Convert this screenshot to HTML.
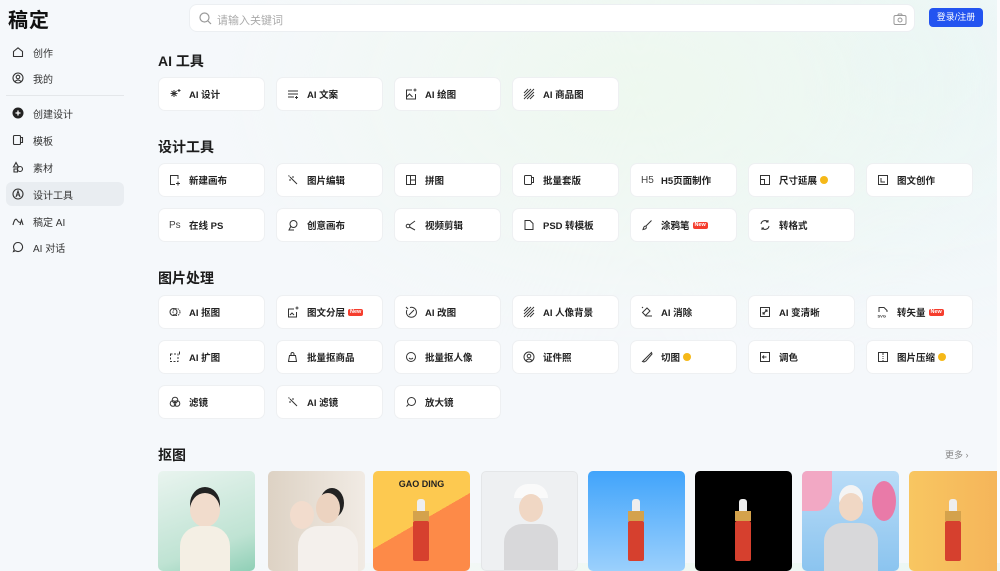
<!DOCTYPE html>
<html><head><meta charset="utf-8"><style>
*{margin:0;padding:0;box-sizing:border-box}
body{width:1000px;height:563px;overflow:hidden;font-family:"Liberation Sans","Noto Sans CJK SC",sans-serif;color:#222;position:relative;
background:radial-gradient(ellipse 420px 260px at 640px 90px,#eef8ef 0%,rgba(238,248,240,0) 100%),radial-gradient(ellipse 400px 300px at 900px 60px,#eaf6f6 0%,rgba(234,246,246,0) 100%),#f5f8fb}
.a{position:absolute}
.logo{left:8px;top:4px;font-size:20px;font-weight:700;letter-spacing:1px;color:#111}
.nav{left:6px;width:118px;height:24px;font-size:10px;color:#333;display:flex;align-items:center;padding-left:6px;border-radius:6px}
.nav svg{width:12px;height:12px;margin-right:9px}
.nav.on{background:#e9edf1}
.search{left:189px;top:4px;width:726px;height:28px;background:#fff;border-radius:8px;border:1px solid #eceff2}
.search span{position:absolute;left:27px;top:7px;font-size:11px;color:#aaa}
.btn{left:929px;top:8px;width:54px;height:19px;background:#2354f0;border-radius:4px;color:#fff;font-size:9px;text-align:center;line-height:19px}
h2{position:absolute;font-size:14px;font-weight:700;color:#1c1c1c;left:158px}
.c{position:absolute;width:107px;height:34px;background:#fff;border-radius:7px;border:1px solid #eef0f2;font-size:9.5px;font-weight:700;color:#222;display:flex;align-items:center;padding-left:10px}
.c svg{width:12px;height:12px;margin-right:8px;flex:none}
.new{background:#f53d2d;color:#fff;font-size:5.5px;padding:0 2px;border-radius:2px;margin-left:3px;line-height:7px;font-weight:700}
.star{width:8px;height:8px;border-radius:50%;background:#f5b818;margin-left:3px;display:inline-block}
.im{position:absolute;top:471px;width:97px;height:100px;border-radius:5px;overflow:hidden}
.bottle{position:absolute;left:40px;top:28px;width:16px;height:62px}
.more{left:945px;top:448px;font-size:9px;color:#888}
</style></head><body>
<div class="a logo">稿定</div>
<div class="a nav" style="top:40px"><svg viewBox="0 0 12 12" fill="none" stroke="#333" stroke-width="1.1"><path d="M1.5 5.5 6 1.8l4.5 3.7V10.5h-9z"/></svg>创作</div>
<div class="a nav" style="top:66px"><svg viewBox="0 0 12 12" fill="none" stroke="#333" stroke-width="1.1"><circle cx="6" cy="6" r="5"/><circle cx="6" cy="5" r="1.8"/><path d="M3 9.5q3-3 6 0"/></svg>我的</div>
<div class="a" style="left:6px;top:95px;width:118px;height:1px;background:#e4e7ea"></div>
<div class="a nav" style="top:101px"><svg viewBox="0 0 12 12"><circle cx="6" cy="6" r="5.5" fill="#222"/><path d="M6 3.5v5M3.5 6h5" stroke="#fff" stroke-width="1.3"/></svg>创建设计</div>
<div class="a nav" style="top:128px"><svg viewBox="0 0 12 12" fill="none" stroke="#333" stroke-width="1.1"><rect x="1.5" y="1.5" width="7" height="9" rx="1"/><path d="M8.5 3.5h2v5h-2"/></svg>模板</div>
<div class="a nav" style="top:155px"><svg viewBox="0 0 12 12" fill="none" stroke="#333" stroke-width="1.1"><path d="M4 1.5 1.5 6h5z"/><circle cx="8" cy="8" r="2.5"/><path d="M2 8h3.5v3H2z"/></svg>素材</div>
<div class="a nav on" style="top:182px"><svg viewBox="0 0 12 12" fill="none" stroke="#333" stroke-width="1.1"><circle cx="6" cy="6" r="5"/><path d="M4 9 6 3l2 6M4.8 7h2.4"/></svg>设计工具</div>
<div class="a nav" style="top:209px"><svg viewBox="0 0 12 12" fill="none" stroke="#333" stroke-width="1.1"><path d="M1 10q2-8 4-5t3 2M8 10l1.5-5 1.5 5"/></svg>稿定 AI</div>
<div class="a nav" style="top:235px"><svg viewBox="0 0 12 12" fill="none" stroke="#333" stroke-width="1.1"><path d="M6 1.5a4.5 4.5 0 1 1-2.5 8.2L1.5 10.5l.8-2A4.5 4.5 0 0 1 6 1.5z"/></svg>AI 对话</div>

<div class="a search"><svg class="a" style="left:9px;top:7px" width="13" height="13" viewBox="0 0 13 13" fill="none" stroke="#999" stroke-width="1.2"><circle cx="5.5" cy="5.5" r="4.5"/><path d="m9 9 3 3"/></svg><span>请输入关键词</span><svg class="a" style="right:7px;top:8px" width="14" height="12" viewBox="0 0 14 12" fill="none" stroke="#999" stroke-width="1"><rect x="1" y="2.5" width="12" height="9" rx="1.5"/><path d="M4.5 2.5 5.5 1h3l1 1.5"/><circle cx="7" cy="7" r="2"/></svg></div>
<div class="a btn">登录/注册</div>

<h2 style="top:51px">AI 工具</h2>
<h2 style="top:137px">设计工具</h2>
<h2 style="top:268px">图片处理</h2>
<h2 style="top:445px">抠图</h2>
<div class="a more">更多 ›</div>

<!-- icon defs reused -->
<svg width="0" height="0" style="position:absolute"><defs>
<g id="sq" fill="none" stroke="#333" stroke-width="1"><rect x="1.5" y="1.5" width="9" height="9" rx="1.5"/></g>
<g id="wand" fill="none" stroke="#333" stroke-width="1"><path d="M3 3l7 7M2 6h2M6 2v2M1.5 1.5l1 1"/></g>
<g id="hatch" fill="none" stroke="#333" stroke-width="0.9"><path d="M1 5 5 1M1 8 8 1M1 11 11 1M4 11l7-7M7 11l4-4"/></g>
</defs></svg>

<div class="c" style="left:158px;top:77px"><svg viewBox="0 0 12 12" fill="none" stroke="#333" stroke-width="1"><path d="M5 2v7M1.5 5.5h7M2.5 3l5 5M7.5 3l-5 5M10 1v3M8.5 2.5h3"/></svg>AI 设计</div>
<div class="c" style="left:276px;top:77px"><svg viewBox="0 0 12 12" fill="none" stroke="#333" stroke-width="1"><path d="M1 3h10M1 6h10M1 9h6M9.5 8v3M8 9.5h3"/></svg>AI 文案</div>
<div class="c" style="left:394px;top:77px"><svg viewBox="0 0 12 12" fill="none" stroke="#333" stroke-width="1"><path d="M7 2H1.5v9h9V6M1.5 9l3-3 3 3M10 0.5v3M8.5 2h3"/></svg>AI 绘图</div>
<div class="c" style="left:512px;top:77px"><svg viewBox="0 0 12 12"><use href="#hatch"/></svg>AI 商品图</div>

<div class="c" style="left:158px;top:163px"><svg viewBox="0 0 12 12" fill="none" stroke="#333" stroke-width="1"><path d="M9 5V1.5H1.5v9H6M9 7.5v4M7 9.5h4"/></svg>新建画布</div>
<div class="c" style="left:276px;top:163px"><svg viewBox="0 0 12 12"><use href="#wand"/></svg>图片编辑</div>
<div class="c" style="left:394px;top:163px"><svg viewBox="0 0 12 12" fill="none" stroke="#333" stroke-width="1"><rect x="1.5" y="1.5" width="9" height="9"/><path d="M5.5 1.5v9M5.5 6h5"/></svg>拼图</div>
<div class="c" style="left:512px;top:163px"><svg viewBox="0 0 12 12" fill="none" stroke="#333" stroke-width="1"><rect x="1.5" y="1.5" width="7" height="9" rx="1"/><path d="M8.5 3.5h2v5h-2"/></svg>批量套版</div>
<div class="c" style="left:630px;top:163px"><span style="font-size:10px;font-weight:400;color:#444;margin-right:8px;width:12px">H5</span>H5页面制作</div>
<div class="c" style="left:748px;top:163px"><svg viewBox="0 0 12 12" fill="none" stroke="#333" stroke-width="1"><rect x="1.5" y="1.5" width="9" height="9"/><path d="M1.5 5.5h4v5"/></svg>尺寸延展<span class="star"></span></div>
<div class="c" style="left:866px;top:163px"><svg viewBox="0 0 12 12" fill="none" stroke="#333" stroke-width="1"><rect x="1.5" y="1.5" width="9" height="9"/><path d="M4 4v4h4"/></svg>图文创作</div>

<div class="c" style="left:158px;top:208px"><span style="font-size:10px;font-weight:400;color:#444;margin-right:8px;width:12px">Ps</span>在线 PS</div>
<div class="c" style="left:276px;top:208px"><svg viewBox="0 0 12 12" fill="none" stroke="#333" stroke-width="1"><circle cx="6.5" cy="5" r="3.5"/><path d="M4 7 2 11h5"/></svg>创意画布</div>
<div class="c" style="left:394px;top:208px"><svg viewBox="0 0 12 12" fill="none" stroke="#333" stroke-width="1"><circle cx="3" cy="7" r="1.8"/><path d="M4.5 6 10 2M4.5 8 10 11"/></svg>视频剪辑</div>
<div class="c" style="left:512px;top:208px"><svg viewBox="0 0 12 12" fill="none" stroke="#333" stroke-width="1"><path d="M2 1.5h5l3 3v6H2z"/></svg>PSD 转模板</div>
<div class="c" style="left:630px;top:208px"><svg viewBox="0 0 12 12" fill="none" stroke="#333" stroke-width="1"><path d="M10.5 1.5 5 7M5 7q-2 0-2.5 2L2 10.5 4 10q2-.5 1-3"/></svg>涂鸦笔<span class="new">New</span></div>
<div class="c" style="left:748px;top:208px"><svg viewBox="0 0 12 12" fill="none" stroke="#333" stroke-width="1"><path d="M2 5a4 4 0 0 1 7-2M10 7a4 4 0 0 1-7 2M9 1v2H7M3 11V9h2"/></svg>转格式</div>

<div class="c" style="left:158px;top:295px"><svg viewBox="0 0 12 12" fill="none" stroke="#333" stroke-width="1"><circle cx="4.5" cy="6" r="3.5"/><circle cx="7.5" cy="6" r="3.5" stroke-dasharray="1.5 1"/></svg>AI 抠图</div>
<div class="c" style="left:276px;top:295px"><svg viewBox="0 0 12 12" fill="none" stroke="#333" stroke-width="1"><path d="M7 3H1.5v8h8V6M3 9l2-2 2 2M10 0.5v3M8.5 2h3"/></svg>图文分层<span class="new">New</span></div>
<div class="c" style="left:394px;top:295px"><svg viewBox="0 0 12 12" fill="none" stroke="#333" stroke-width="1"><path d="M2 4a5 5 0 1 0 3-2.5M4 9l5-5M1 1l2 2"/></svg>AI 改图</div>
<div class="c" style="left:512px;top:295px"><svg viewBox="0 0 12 12"><use href="#hatch"/></svg>AI 人像背景</div>
<div class="c" style="left:630px;top:295px"><svg viewBox="0 0 12 12" fill="none" stroke="#333" stroke-width="1"><path d="M4 10 9 5 6 2 1.5 6.5 5 10h6M1 1l1 1"/></svg>AI 消除</div>
<div class="c" style="left:748px;top:295px"><svg viewBox="0 0 12 12" fill="none" stroke="#333" stroke-width="1"><rect x="1.5" y="1.5" width="9" height="9"/><path d="M4 8l4-4M6 4h2v2M4 6v2h2"/></svg>AI 变清晰</div>
<div class="c" style="left:866px;top:295px"><svg viewBox="0 0 12 12" fill="none" stroke="#333" stroke-width="1"><path d="M2 6V1.5h5l3 3V6"/><text x="0.5" y="11.5" font-size="4" fill="#333" stroke="none" font-family="Liberation Sans">SVG</text></svg>转矢量<span class="new">New</span></div>

<div class="c" style="left:158px;top:340px"><svg viewBox="0 0 12 12" fill="none" stroke="#333" stroke-width="1" stroke-dasharray="2 1.5"><rect x="1.5" y="3" width="7.5" height="7.5"/><path d="M10.5 0.5v3" stroke-dasharray="none"/></svg>AI 扩图</div>
<div class="c" style="left:276px;top:340px"><svg viewBox="0 0 12 12" fill="none" stroke="#333" stroke-width="1"><path d="M2.5 4.5h6l1 6h-8zM4 4.5V3a1.5 1.5 0 0 1 3 0v1.5"/></svg>批量抠商品</div>
<div class="c" style="left:394px;top:340px"><svg viewBox="0 0 12 12" fill="none" stroke="#333" stroke-width="1"><circle cx="6" cy="6" r="4.5"/><path d="M4 7q2 2 4 0"/></svg>批量抠人像</div>
<div class="c" style="left:512px;top:340px"><svg viewBox="0 0 12 12" fill="none" stroke="#333" stroke-width="1"><circle cx="6" cy="6" r="5"/><circle cx="6" cy="5" r="1.8"/><path d="M3 9.5q3-3 6 0"/></svg>证件照</div>
<div class="c" style="left:630px;top:340px"><svg viewBox="0 0 12 12" fill="none" stroke="#333" stroke-width="1"><path d="M10.5 1.5 3 9l-1.5 1.5L3 11l2-1 6-7z"/></svg>切图<span class="star"></span></div>
<div class="c" style="left:748px;top:340px"><svg viewBox="0 0 12 12" fill="none" stroke="#333" stroke-width="1"><rect x="1.5" y="1.5" width="9" height="9"/><path d="M3.5 6h4M5 4.5 3.5 6 5 7.5"/></svg>调色</div>
<div class="c" style="left:866px;top:340px"><svg viewBox="0 0 12 12" fill="none" stroke="#333" stroke-width="1"><rect x="1.5" y="1.5" width="9" height="9"/><path d="M6 2v2M6 5v1M6 7v1M6 9v1"/></svg>图片压缩<span class="star"></span></div>

<div class="c" style="left:158px;top:385px"><svg viewBox="0 0 12 12" fill="none" stroke="#333" stroke-width="1"><circle cx="6" cy="4" r="2.8"/><circle cx="4" cy="7.5" r="2.8"/><circle cx="8" cy="7.5" r="2.8"/></svg>滤镜</div>
<div class="c" style="left:276px;top:385px"><svg viewBox="0 0 12 12"><use href="#wand"/></svg>AI 滤镜</div>
<div class="c" style="left:394px;top:385px"><svg viewBox="0 0 12 12" fill="none" stroke="#333" stroke-width="1"><circle cx="6.5" cy="5.5" r="4"/><path d="M3.5 8.5 1.5 10.5"/></svg>放大镜</div>

<div class="im" style="left:158px;background:linear-gradient(160deg,#e9f4ef,#bfe3d3 70%,#8fcfb6)"><div class="a" style="left:32px;top:22px;width:30px;height:34px;border-radius:50%;background:#f1dccc;box-shadow:0 -6px 0 #222"></div><div class="a" style="left:22px;top:55px;width:50px;height:50px;border-radius:20px 20px 0 0;background:#f4efe4"></div></div>
<div class="im" style="left:268px;background:linear-gradient(90deg,#ddd2c4,#f1ebe4)"><div class="a" style="left:48px;top:22px;width:24px;height:30px;border-radius:50%;background:#ecd3c0;box-shadow:4px -5px 0 #222"></div><div class="a" style="left:22px;top:30px;width:24px;height:28px;border-radius:50%;background:#f2dccd"></div><div class="a" style="left:30px;top:55px;width:60px;height:50px;border-radius:20px 20px 0 0;background:#f4f0ec"></div></div>
<div class="im" style="left:373px;background:linear-gradient(150deg,#fdc950 50%,#fd8a48 50%)"><div class="a" style="left:0;top:8px;width:97px;text-align:center;font-size:9px;font-weight:700;color:#222">GAO DING</div><div class="bottle" style="top:28px"><div style="height:12px;width:8px;margin:0 auto;background:#eee;border-radius:3px 3px 0 0"></div><div style="height:10px;background:#d4a24c"></div><div style="height:40px;background:#d6402e;border-radius:2px"></div></div></div>
<div class="im" style="left:481px;background:#eef0f2;border:1px solid #e4e6e8"><div class="a" style="left:32px;top:12px;width:34px;height:14px;border-radius:17px 17px 0 0;background:#fafafa"></div><div class="a" style="left:37px;top:22px;width:24px;height:28px;border-radius:50%;background:#f0d7c4"></div><div class="a" style="left:22px;top:52px;width:54px;height:50px;border-radius:18px 18px 0 0;background:#d8d8da"></div></div>
<div class="im" style="left:588px;background:linear-gradient(#41a4fb,#9bd0fc)"><div class="bottle"><div style="height:12px;width:8px;margin:0 auto;background:#eee;border-radius:3px 3px 0 0"></div><div style="height:10px;background:#d4a24c"></div><div style="height:40px;background:#d6402e;border-radius:2px"></div></div></div>
<div class="im" style="left:695px;background:#000"><div class="bottle"><div style="height:12px;width:8px;margin:0 auto;background:#eee;border-radius:3px 3px 0 0"></div><div style="height:10px;background:#d4a24c"></div><div style="height:40px;background:#d6402e;border-radius:2px"></div></div></div>
<div class="im" style="left:802px;background:linear-gradient(#b9dcf7,#8bc4ef);"><div class="a" style="left:0;top:0;width:30px;height:40px;background:#f2a8c4;border-radius:0 0 50% 0"></div><div class="a" style="left:70px;top:10px;width:24px;height:40px;background:#e97aa8;border-radius:50%"></div><div class="a" style="left:37px;top:22px;width:24px;height:28px;border-radius:50%;background:#f0d7c4;box-shadow:0 -8px 0 #f4f4f4"></div><div class="a" style="left:22px;top:52px;width:54px;height:50px;border-radius:18px 18px 0 0;background:#d8d8da"></div></div>
<div class="im" style="left:909px;width:88px;border-radius:5px 0 0 5px;background:linear-gradient(90deg,#f8c661,#f5b55a)"><div class="bottle" style="left:36px"><div style="height:12px;width:8px;margin:0 auto;background:#eee;border-radius:3px 3px 0 0"></div><div style="height:10px;background:#d4a24c"></div><div style="height:40px;background:#d6402e;border-radius:2px"></div></div></div>
<div class="a" style="left:997px;top:0;width:3px;height:563px;background:#fbfcfd"></div>
</body></html>
